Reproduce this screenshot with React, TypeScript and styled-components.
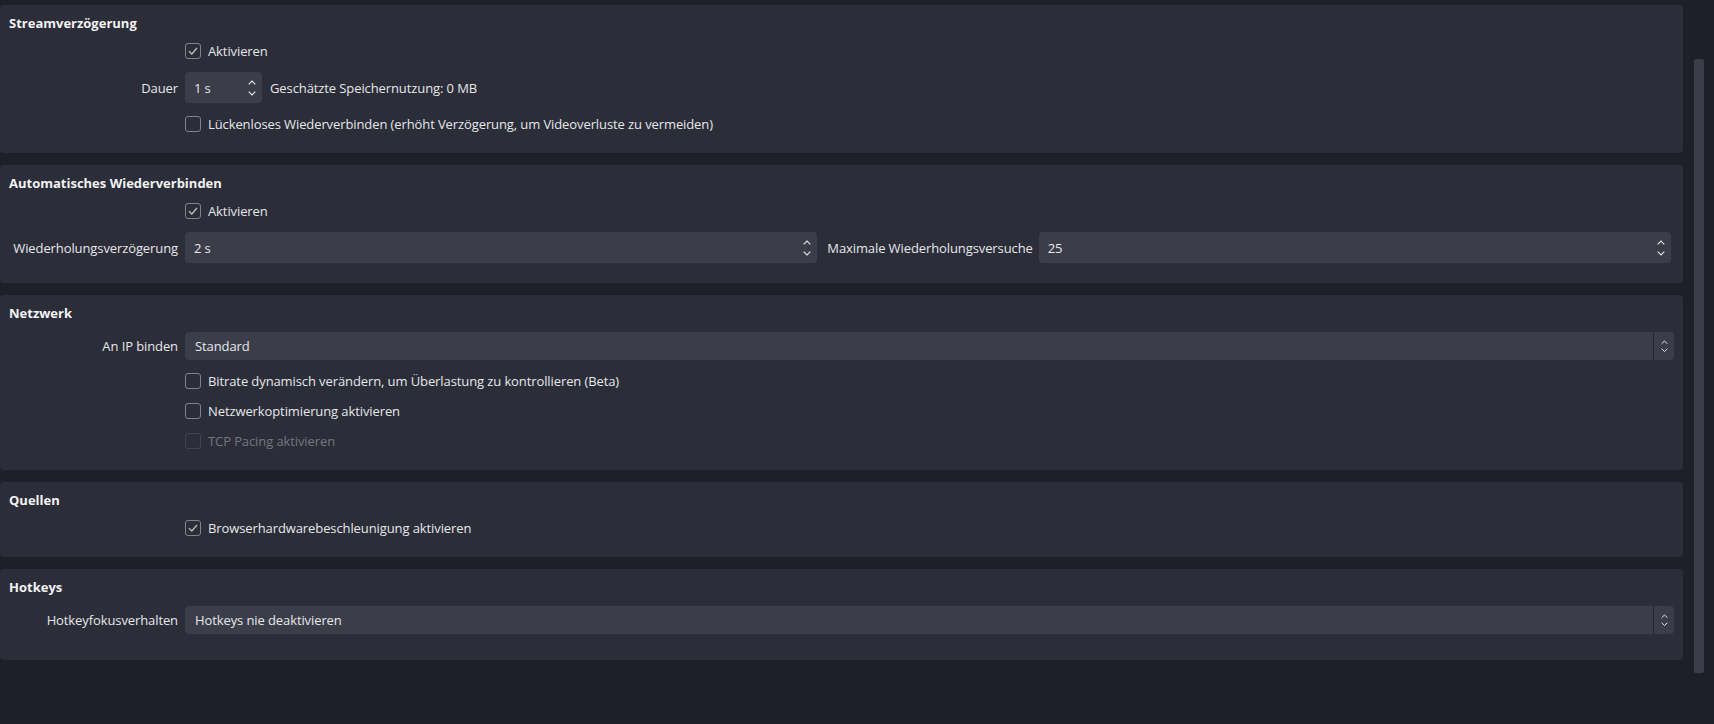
import React from 'react';
import styled, { createGlobalStyle } from 'styled-components';

const GlobalStyle = createGlobalStyle`
  html, body {
    margin: 0;
    padding: 0;
    background: #1e2029;
  }
  body {
    font-family: "Open Sans", "Noto Sans", sans-serif;
    font-size: 13px;
    letter-spacing: -0.1px;
    color: #e6e7ea;
  }
`;

const Page = styled.div`
  display: flex;
  height: 100vh;
  overflow: hidden;
  background: #1e2029;
`;

const Content = styled.div`
  width: 1683px;
  padding-top: 5px;
  display: flex;
  flex-direction: column;
  gap: 12px;
`;

const ScrollTrack = styled.div`
  width: 10px;
  margin-left: 11px;
  padding: 59px 0 51px;
  display: flex;
`;

const ScrollThumb = styled.div`
  flex: 1;
  background: #3b3e49;
  border-radius: 2px;
`;

// eine Gruppe (Groupbox)
const Panel = styled.section<{ $pb?: number }>`
  background: #2b2d38;
  border-radius: 4px;
  padding: 9px 9px ${(p) => p.$pb ?? 20}px 9px;
`;

const Title = styled.h2`
  margin: 0 0 10px;
  font-size: 13px;
  line-height: 18px;
  font-weight: 700;
  letter-spacing: 0;
  color: #f2f2f4;
`;

const Form = styled.div`
  display: grid;
  grid-template-columns: 169px 1fr;
  column-gap: 7px;
  row-gap: 12px;
  align-items: center;
`;

const Label = styled.div`
  text-align: right;
  white-space: nowrap;
  line-height: 18px;
`;

const Field = styled.div`
  grid-column: 2;
  display: flex;
  align-items: center;
  min-width: 0;
`;

const CheckRow = styled.label<{ $disabled?: boolean }>`
  display: flex;
  align-items: center;
  gap: 7px;
  height: 18px;
  color: ${(p) => (p.$disabled ? '#75777f' : '#e6e7ea')};
`;

const Box = styled.span<{ $disabled?: boolean }>`
  width: 16px;
  height: 16px;
  box-sizing: border-box;
  border: 1.5px solid ${(p) => (p.$disabled ? '#43464f' : '#80838b')};
  border-radius: 3px;
  display: flex;
  align-items: center;
  justify-content: center;
`;

const Spin = styled.div<{ $w?: number; $flex?: boolean; $mr?: number }>`
  height: 31px;
  box-sizing: border-box;
  background: #3b3e49;
  border-radius: 4px;
  display: flex;
  align-items: center;
  padding: 0 6px 0 9px;
  ${(p) => (p.$w ? `width: ${p.$w}px;` : '')}
  ${(p) => (p.$flex ? 'flex: 1;' : '')}
  margin-right: ${(p) => p.$mr ?? 0}px;
`;

const Value = styled.span`
  flex: 1;
  white-space: nowrap;
`;

const Arrows = styled.span<{ $gap: number }>`
  display: flex;
  flex-direction: column;
  align-items: center;
  gap: ${(p) => p.$gap}px;
  width: 9px;
`;

const Combo = styled.div`
  flex: 1;
  height: 28px;
  display: flex;
  background: #3b3e49;
  border-radius: 4px;
  overflow: hidden;
`;

const ComboText = styled.span`
  flex: 1;
  display: flex;
  align-items: center;
  padding-left: 10px;
`;

const ComboButton = styled.span`
  width: 20px;
  border-left: 1px solid #23252e;
  display: flex;
  align-items: center;
  justify-content: center;
`;

const Inline = styled.span<{ $ml: number; $mr?: number }>`
  margin-left: ${(p) => p.$ml}px;
  margin-right: ${(p) => p.$mr ?? 0}px;
  white-space: nowrap;
`;

const Check = () => (
  <svg width="12" height="12" viewBox="0 0 12 12">
    <path d="M2 6.3 L4.8 9 L10 3" fill="none" stroke="#b9bbc1" strokeWidth="1.4" />
  </svg>
);

const Chevron = ({ up, size = 8 }: { up?: boolean; size?: number }) => (
  <svg width={size} height={size / 2 + 1} viewBox="0 0 8 5">
    <path
      d={up ? 'M0.7 4.3 L4 1 L7.3 4.3' : 'M0.7 0.7 L4 4 L7.3 0.7'}
      fill="none"
      stroke="#e6e7ea"
      strokeWidth="1.1"
    />
  </svg>
);

const CheckBox = ({ checked, disabled, children }: { checked?: boolean; disabled?: boolean; children: React.ReactNode }) => (
  <CheckRow $disabled={disabled}>
    <Box $disabled={disabled}>{checked && <Check />}</Box>
    {children}
  </CheckRow>
);

const SpinBox = ({ value, w, flex, mr }: { value: string; w?: number; flex?: boolean; mr?: number }) => (
  <Spin $w={w} $flex={flex} $mr={mr}>
    <Value>{value}</Value>
    <Arrows $gap={6}>
      <Chevron up />
      <Chevron />
    </Arrows>
  </Spin>
);

const ComboBox = ({ value }: { value: string }) => (
  <Combo>
    <ComboText>{value}</ComboText>
    <ComboButton>
      <Arrows $gap={3}>
        <Chevron up size={7} />
        <Chevron size={7} />
      </Arrows>
    </ComboButton>
  </Combo>
);

export default function App() {
  return (
    <Page>
      <GlobalStyle />
      <Content>
        <Panel>
          <Title>Streamverzögerung</Title>
          <Form>
            <Field>
              <CheckBox checked>Aktivieren</CheckBox>
            </Field>
            <Label>Dauer</Label>
            <Field>
              <SpinBox value="1 s" w={77} />
              <Inline $ml={8}>Geschätzte Speichernutzung: 0 MB</Inline>
            </Field>
            <Field>
              <CheckBox>Lückenloses Wiederverbinden (erhöht Verzögerung, um Videoverluste zu vermeiden)</CheckBox>
            </Field>
          </Form>
        </Panel>

        <Panel>
          <Title>Automatisches Wiederverbinden</Title>
          <Form>
            <Field>
              <CheckBox checked>Aktivieren</CheckBox>
            </Field>
            <Label>Wiederholungsverzögerung</Label>
            <Field>
              <SpinBox value="2 s" flex />
              <Inline $ml={10} $mr={6}>Maximale Wiederholungsversuche</Inline>
              <SpinBox value="25" flex mr={3} />
            </Field>
          </Form>
        </Panel>

        <Panel>
          <Title>Netzwerk</Title>
          <Form>
            <Label>An IP binden</Label>
            <Field>
              <ComboBox value="Standard" />
            </Field>
            <Field>
              <CheckBox>Bitrate dynamisch verändern, um Überlastung zu kontrollieren (Beta)</CheckBox>
            </Field>
            <Field>
              <CheckBox>Netzwerkoptimierung aktivieren</CheckBox>
            </Field>
            <Field>
              <CheckBox disabled>TCP Pacing aktivieren</CheckBox>
            </Field>
          </Form>
        </Panel>

        <Panel>
          <Title>Quellen</Title>
          <Form>
            <Field>
              <CheckBox checked>Browserhardwarebeschleunigung aktivieren</CheckBox>
            </Field>
          </Form>
        </Panel>

        <Panel $pb={26}>
          <Title>Hotkeys</Title>
          <Form>
            <Label>Hotkeyfokusverhalten</Label>
            <Field>
              <ComboBox value="Hotkeys nie deaktivieren" />
            </Field>
          </Form>
        </Panel>
      </Content>
      <ScrollTrack>
        <ScrollThumb />
      </ScrollTrack>
    </Page>
  );
}
